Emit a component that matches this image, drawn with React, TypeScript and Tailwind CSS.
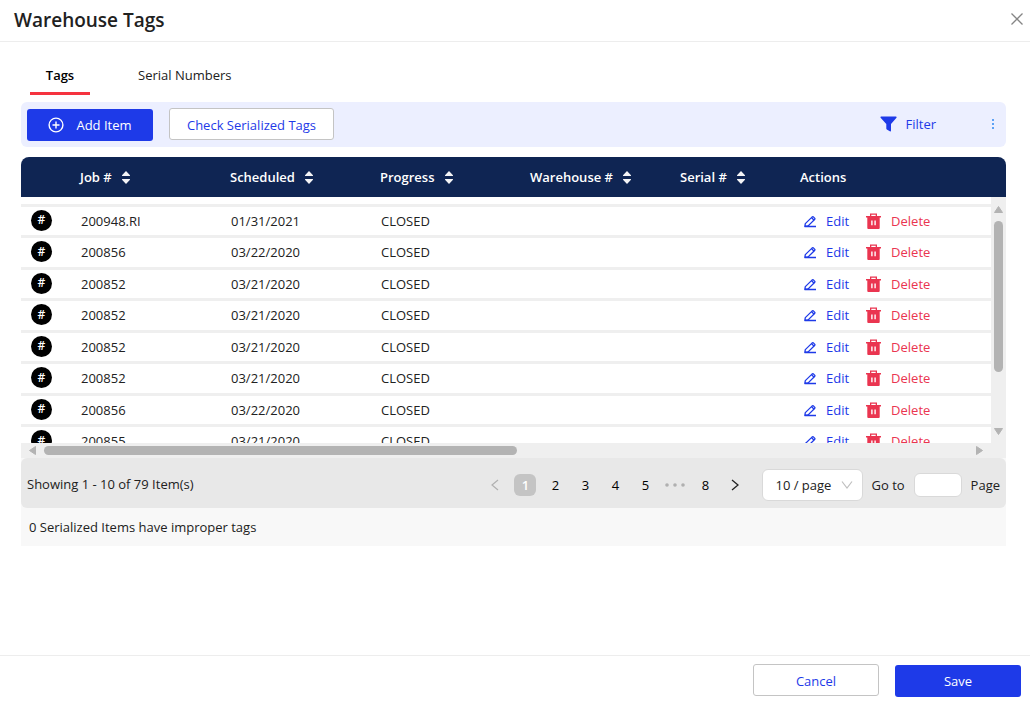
import React from "react";

const rows = [
  ["200948.RI", "01/31/2021"],
  ["200856", "03/22/2020"],
  ["200852", "03/21/2020"],
  ["200852", "03/21/2020"],
  ["200852", "03/21/2020"],
  ["200852", "03/21/2020"],
  ["200856", "03/22/2020"],
  ["200855", "03/21/2020"],
];

const columns = ["Job #", "Scheduled", "Progress", "Warehouse #", "Serial #"];

function SortIcon() {
  return (
    <svg width="8" height="13" viewBox="0 0 8 13" fill="#f4f4f6" aria-hidden="true">
      <path d="M4 0 L8 4.2 Q8.2 5 7.4 5 H.6 Q-.2 5 0 4.2Z" />
      <path d="M4 13 L8 8.8 Q8.2 8 7.4 8 H.6 Q-.2 8 0 8.8Z" />
    </svg>
  );
}

function EditIcon() {
  return (
    <svg width="12" height="14" viewBox="0 0 12 14" fill="none" stroke="#1e3ae8" strokeWidth="1.3" strokeLinejoin="round" aria-hidden="true">
      <path d="M12 12.5 H.8 L1.3 9.6 L8 3.1 Q8.8 2.4 9.6 3.1 L10.6 4.1 Q11.3 4.8 10.6 5.5 L4.4 11.6 L.8 12.5" />
      <path d="M7.6 3.8 L9.9 6" />
    </svg>
  );
}

function TrashIcon() {
  return (
    <svg width="15" height="16" viewBox="0 0 15 16" fill="#ea3550" aria-hidden="true">
      <path fillRule="evenodd" d="M4 0.6 H11 V3 H15 V4.6 H13.7 V15 Q13.7 16 12.7 16 H2.3 Q1.3 16 1.3 15 V4.6 H0 V3 H4Z M5.3 1.8 V3 H9.7 V1.8Z M5.2 7.5 V12.3 H6.6 V7.5Z M8.4 7.5 V12.3 H9.8 V7.5Z" />
    </svg>
  );
}

function Arrow({ d }: { d: string }) {
  return (
    <svg width="9" height="9" viewBox="0 0 9 9" fill="#b3b3b3" stroke="#b3b3b3" strokeLinejoin="round" aria-hidden="true">
      <path d={d} />
    </svg>
  );
}

export default function App() {
  return (
    <div className="flex min-h-screen flex-col bg-white font-['Open_Sans','Noto_Sans',sans-serif] text-[13px] leading-5 text-[#212121]">
      <header className="flex h-[42px] items-center justify-between border-b border-[#ededed] pr-[7px] pb-1 pl-3.5">
        <h1 className="pt-0.5 text-[19px] font-semibold">Warehouse Tags</h1>
        <button aria-label="Close">
          <svg width="12" height="12" viewBox="0 0 12 12" fill="none" stroke="#858585" strokeWidth="1.3">
            <path d="M.5 .5 L11.5 11.5 M11.5 .5 L.5 11.5" />
          </svg>
        </button>
      </header>

      <main className="flex-1 pr-6 pl-[21px]">
        <div role="tablist" className="flex gap-8 pt-[13px] pl-[9px]">
          <button role="tab" aria-selected="true" className="h-10 w-[60px] border-b-3 border-[#f5333f] pt-0.5 font-semibold text-black">Tags</button>
          <button role="tab" aria-selected="false" className="h-10 border-b-3 border-transparent px-4 pt-0.5">Serial Numbers</button>
        </div>

        <div className="mt-[7px] flex h-[45px] items-center rounded-md bg-[#ecefff] px-1.5 text-[#1e3ae8]">
          <button className="flex h-8 w-[126px] items-center justify-center gap-3 rounded-[3px] bg-[#1e3ae8] text-white">
            <svg width="16" height="16" viewBox="0 0 16 16" fill="none" stroke="currentColor" strokeWidth="1.4" aria-hidden="true">
              <circle cx="8" cy="8" r="6.9" />
              <path d="M8 4.5 V11.5 M4.5 8 H11.5" />
            </svg>
            Add Item
          </button>
          <button className="mb-0.5 ml-4 h-8 w-[165px] rounded-[3px] border border-[#c4c4c4] bg-white pt-0.5">Check Serialized Tags</button>
          <button className="mb-0.5 ml-auto flex items-center gap-2">
            <svg width="17" height="16" viewBox="0 0 17 16" fill="currentColor" aria-hidden="true">
              <path d="M1 .5 H16 Q17 .7 16.5 1.8 L11 8 V14.8 Q10.8 15.8 9.8 15.3 L6.8 13.5 Q6.3 13.2 6.3 12.6 V8 L.6 1.8 Q0 .8 1 .5Z" />
            </svg>
            Filter
          </button>
          <button aria-label="More options" className="mb-0.5 ml-14 pr-1.5">
            <svg width="2" height="12" viewBox="0 0 2 12" fill="#5da2f5">
              <path d="M0 1 H2 V3 H0Z M0 5 H2 V7 H0Z M0 9 H2 V11 H0Z" />
            </svg>
          </button>
        </div>

        <div className="relative mt-2.5 h-[286px] overflow-hidden rounded-t-lg">
          <table className="w-full table-fixed border-separate border-spacing-0 text-left">
            <colgroup>
              <col className="w-[50px]" />
              <col className="w-[150px]" />
              <col className="w-[150px]" />
              <col className="w-[150px]" />
              <col className="w-[150px]" />
              <col className="w-[120px]" />
              <col />
            </colgroup>
            <thead>
              <tr className="h-10 bg-[#0f2553] text-white">
                <th />
                {columns.map((name) => (
                  <th key={name} className="p-0 pl-[9px] font-semibold">
                    <button className="flex items-center gap-2.5">
                      {name}
                      <SortIcon />
                    </button>
                  </th>
                ))}
                <th className="p-0 pl-[9px] font-semibold">Actions</th>
              </tr>
            </thead>
            <tbody>
              <tr className="h-[7px]" aria-hidden="true">
                <td colSpan={7} className="p-0" />
              </tr>
              {rows.map(([job, date], i) => (
                <tr key={i} className="h-8 even:h-[31px]">
                  <td className="border-t-3 border-[#efefef] p-0 pb-0.5 pl-2.5">
                    <span className="flex size-[21px] items-center justify-center rounded-full bg-black text-xs font-semibold text-white">#</span>
                  </td>
                  <td className="border-t-3 border-[#efefef] p-0 pb-px pl-2.5">{job}</td>
                  <td className="border-t-3 border-[#efefef] p-0 pb-px pl-2.5">{date}</td>
                  <td className="border-t-3 border-[#efefef] p-0 pb-px pl-2.5">CLOSED</td>
                  <td className="border-t-3 border-[#efefef] p-0" />
                  <td className="border-t-3 border-[#efefef] p-0" />
                  <td className="border-t-3 border-[#efefef] p-0 pb-px pl-[13px]">
                    <div className="flex items-center gap-[17px]">
                      <button className="flex items-center gap-2.5 text-[#1e3ae8]">
                        <EditIcon />
                        Edit
                      </button>
                      <button className="flex items-center gap-2.5 text-[#ea3550]">
                        <TrashIcon />
                        Delete
                      </button>
                    </div>
                  </td>
                </tr>
              ))}
            </tbody>
          </table>
          <div className="absolute top-10 right-0 bottom-0 flex w-[15px] flex-col items-center bg-[#efefef] pt-2 pb-[7px]">
            <Arrow d="M4.5 1.5 L8.5 7.5 H.5Z" />
            <div className="mt-[7px] h-[151px] w-[9px] rounded-full bg-[#b3b3b3]" />
            <div className="mt-auto flex">
              <Arrow d="M4.5 7.5 L8.5 1.5 H.5Z" />
            </div>
          </div>
        </div>
        <div className="flex h-[15px] items-center bg-[#efefef]">
          <div className="mx-[7px] flex">
            <Arrow d="M1.5 4.5 L7.5 .5 V8.5Z" />
          </div>
          <div className="h-[9px] w-12/25 rounded-full bg-[#b3b3b3]" />
          <div className="mr-[22px] ml-auto flex">
            <Arrow d="M7.5 4.5 L1.5 .5 V8.5Z" />
          </div>
        </div>

        <div className="bg-[#f8f8f8]">
          <div className="flex h-[50px] items-center rounded-md bg-[#e8e8e8] px-1.5">
            <span className="mt-0.5">Showing 1 - 10 of 79 Item(s)</span>
            <nav aria-label="Pagination" className="mt-1 ml-auto flex items-center gap-2">
              <button aria-label="Previous page" className="flex size-[22px] items-center justify-center">
                <svg width="8" height="12" viewBox="0 0 8 12" fill="none" stroke="#b0b0b0" strokeWidth="1.2">
                  <path d="M7 1 L1 6 L7 11" />
                </svg>
              </button>
              <button aria-current="page" className="size-[22px] rounded-md bg-[#c4c4c4] font-semibold text-white">1</button>
              <button className="size-[22px] text-black">2</button>
              <button className="size-[22px] text-black">3</button>
              <button className="size-[22px] text-black">4</button>
              <button className="size-[22px] text-black">5</button>
              <button aria-label="Next 5 pages" className="flex size-[22px] items-center justify-center">
                <svg width="20" height="4" viewBox="0 0 20 4" fill="#b0b0b0">
                  <circle cx="2" cy="2" r="1.8" />
                  <circle cx="10" cy="2" r="1.8" />
                  <circle cx="18" cy="2" r="1.8" />
                </svg>
              </button>
              <button className="size-[22px] text-black">8</button>
              <button aria-label="Next page" className="flex size-[22px] items-center justify-center">
                <svg width="8" height="12" viewBox="0 0 8 12" fill="none" stroke="#222222" strokeWidth="1.3">
                  <path d="M1 1 L7 6 L1 11" />
                </svg>
              </button>
            </nav>
            <div className="mt-1 ml-4 grid items-center">
              <select aria-label="Page size" className="col-start-1 row-start-1 h-8 w-[101px] appearance-none rounded-md border border-[#d9d9d9] bg-white pl-3">
                <option>10 / page</option>
              </select>
              <svg className="pointer-events-none col-start-1 row-start-1 mr-2.5 justify-self-end" width="12" height="8" viewBox="0 0 12 8" fill="none" stroke="#bfbfbf" strokeWidth="1.2" aria-hidden="true">
                <path d="M1 .5 L6 7 L11 .5" />
              </svg>
            </div>
            <label className="mt-1 ml-2 flex items-center gap-[9px]">
              Go to
              <input type="text" className="h-6 w-12 rounded-md border border-[#d9d9d9] bg-white px-2" />
              Page
            </label>
          </div>
          <p className="px-2 py-[9px]">0 Serialized Items have improper tags</p>
        </div>
      </main>

      <footer className="flex h-[50px] items-start justify-end gap-4 border-t border-[#ededed] pt-2 pr-[9px]">
        <button className="h-8 w-[126px] rounded-[3px] border border-[#c4c4c4] bg-white pt-px text-[#1e3ae8]">Cancel</button>
        <button className="mt-px h-8 w-[126px] rounded-[3px] bg-[#1e3ae8] text-white">Save</button>
      </footer>
    </div>
  );
}
